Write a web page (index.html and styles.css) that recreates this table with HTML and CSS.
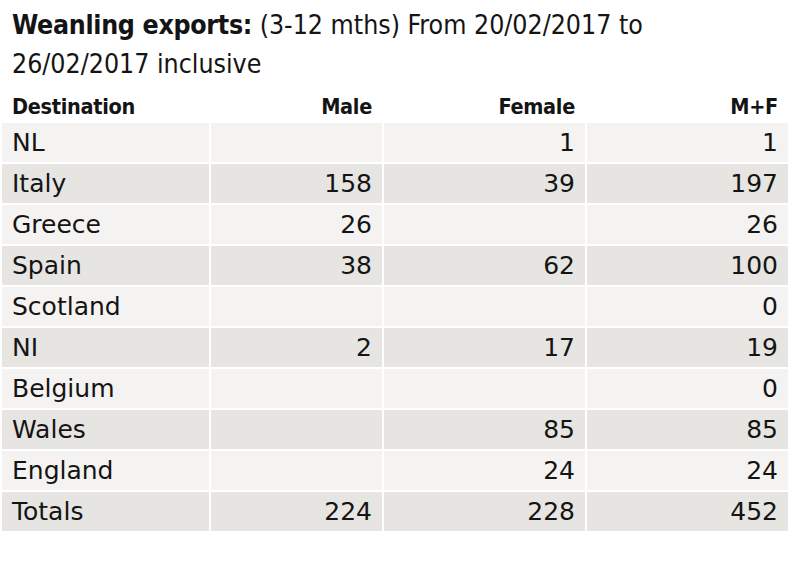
FILE: index.html
```html
<!DOCTYPE html>
<html>
<head>
<meta charset="utf-8">
<link rel="stylesheet" href="styles.css">
</head>
<body>
<div class="title"><strong>Weanling exports:</strong> (3-12 mths) From 20/02/2017 to<br>26/02/2017 inclusive</div>
<table class="exports">
  <thead>
    <tr><th class="dest">Destination</th><th class="num c2">Male</th><th class="num c3">Female</th><th class="num c4">M+F</th></tr>
  </thead>
  <tbody>
    <tr class="light"><td>NL</td><td class="num"></td><td class="num">1</td><td class="num">1</td></tr>
    <tr class="dark"><td>Italy</td><td class="num">158</td><td class="num">39</td><td class="num">197</td></tr>
    <tr class="light"><td>Greece</td><td class="num">26</td><td class="num"></td><td class="num">26</td></tr>
    <tr class="dark"><td>Spain</td><td class="num">38</td><td class="num">62</td><td class="num">100</td></tr>
    <tr class="light"><td>Scotland</td><td class="num"></td><td class="num"></td><td class="num">0</td></tr>
    <tr class="dark"><td>NI</td><td class="num">2</td><td class="num">17</td><td class="num">19</td></tr>
    <tr class="light"><td>Belgium</td><td class="num"></td><td class="num"></td><td class="num">0</td></tr>
    <tr class="dark"><td>Wales</td><td class="num"></td><td class="num">85</td><td class="num">85</td></tr>
    <tr class="light"><td>England</td><td class="num"></td><td class="num">24</td><td class="num">24</td></tr>
    <tr class="dark"><td>Totals</td><td class="num">224</td><td class="num">228</td><td class="num">452</td></tr>
  </tbody>
</table>
</body>
</html>
```

FILE: styles.css
```css
html, body {
  margin: 0;
  padding: 0;
  background: #ffffff;
}

body {
  font-family: "DejaVu Sans", "Liberation Sans", sans-serif;
  color: #141414;
}

.title {
  font-family: "DejaVu Sans Condensed", "DejaVu Sans", sans-serif;
  font-stretch: condensed;
  font-size: 26.5px;
  line-height: 39px;
  padding: 5px 12px 0;
  height: 78px;
}

.title strong {
  font-weight: bold;
  letter-spacing: -0.3px;
}

.exports {
  border-collapse: separate;
  border-spacing: 2px;
  width: 790px;
  table-layout: fixed;
  margin-top: 0;
}

.exports th {
  font-family: "DejaVu Sans Condensed", "DejaVu Sans", sans-serif;
  font-stretch: condensed;
  font-weight: bold;
  font-size: 21.5px;
  letter-spacing: -0.3px;
  line-height: 24px;
  height: 36px;
  padding: 0 10px 2px;
  vertical-align: bottom;
  box-sizing: border-box;
  text-align: left;
}

.exports th.dest { width: 207px; }
.exports th.c2 { width: 171px; }
.exports th.c3 { width: 201px; }
.exports th.c4 { width: 201px; }

.exports td {
  font-size: 25px;
  height: 39px;
  line-height: 39px;
  padding: 0 10px;
  box-sizing: border-box;
  vertical-align: middle;
  white-space: nowrap;
}

.exports .num {
  text-align: right;
}

.light td {
  background: #f4f3f1;
}

.dark td {
  background: #e6e5e2;
}
```
